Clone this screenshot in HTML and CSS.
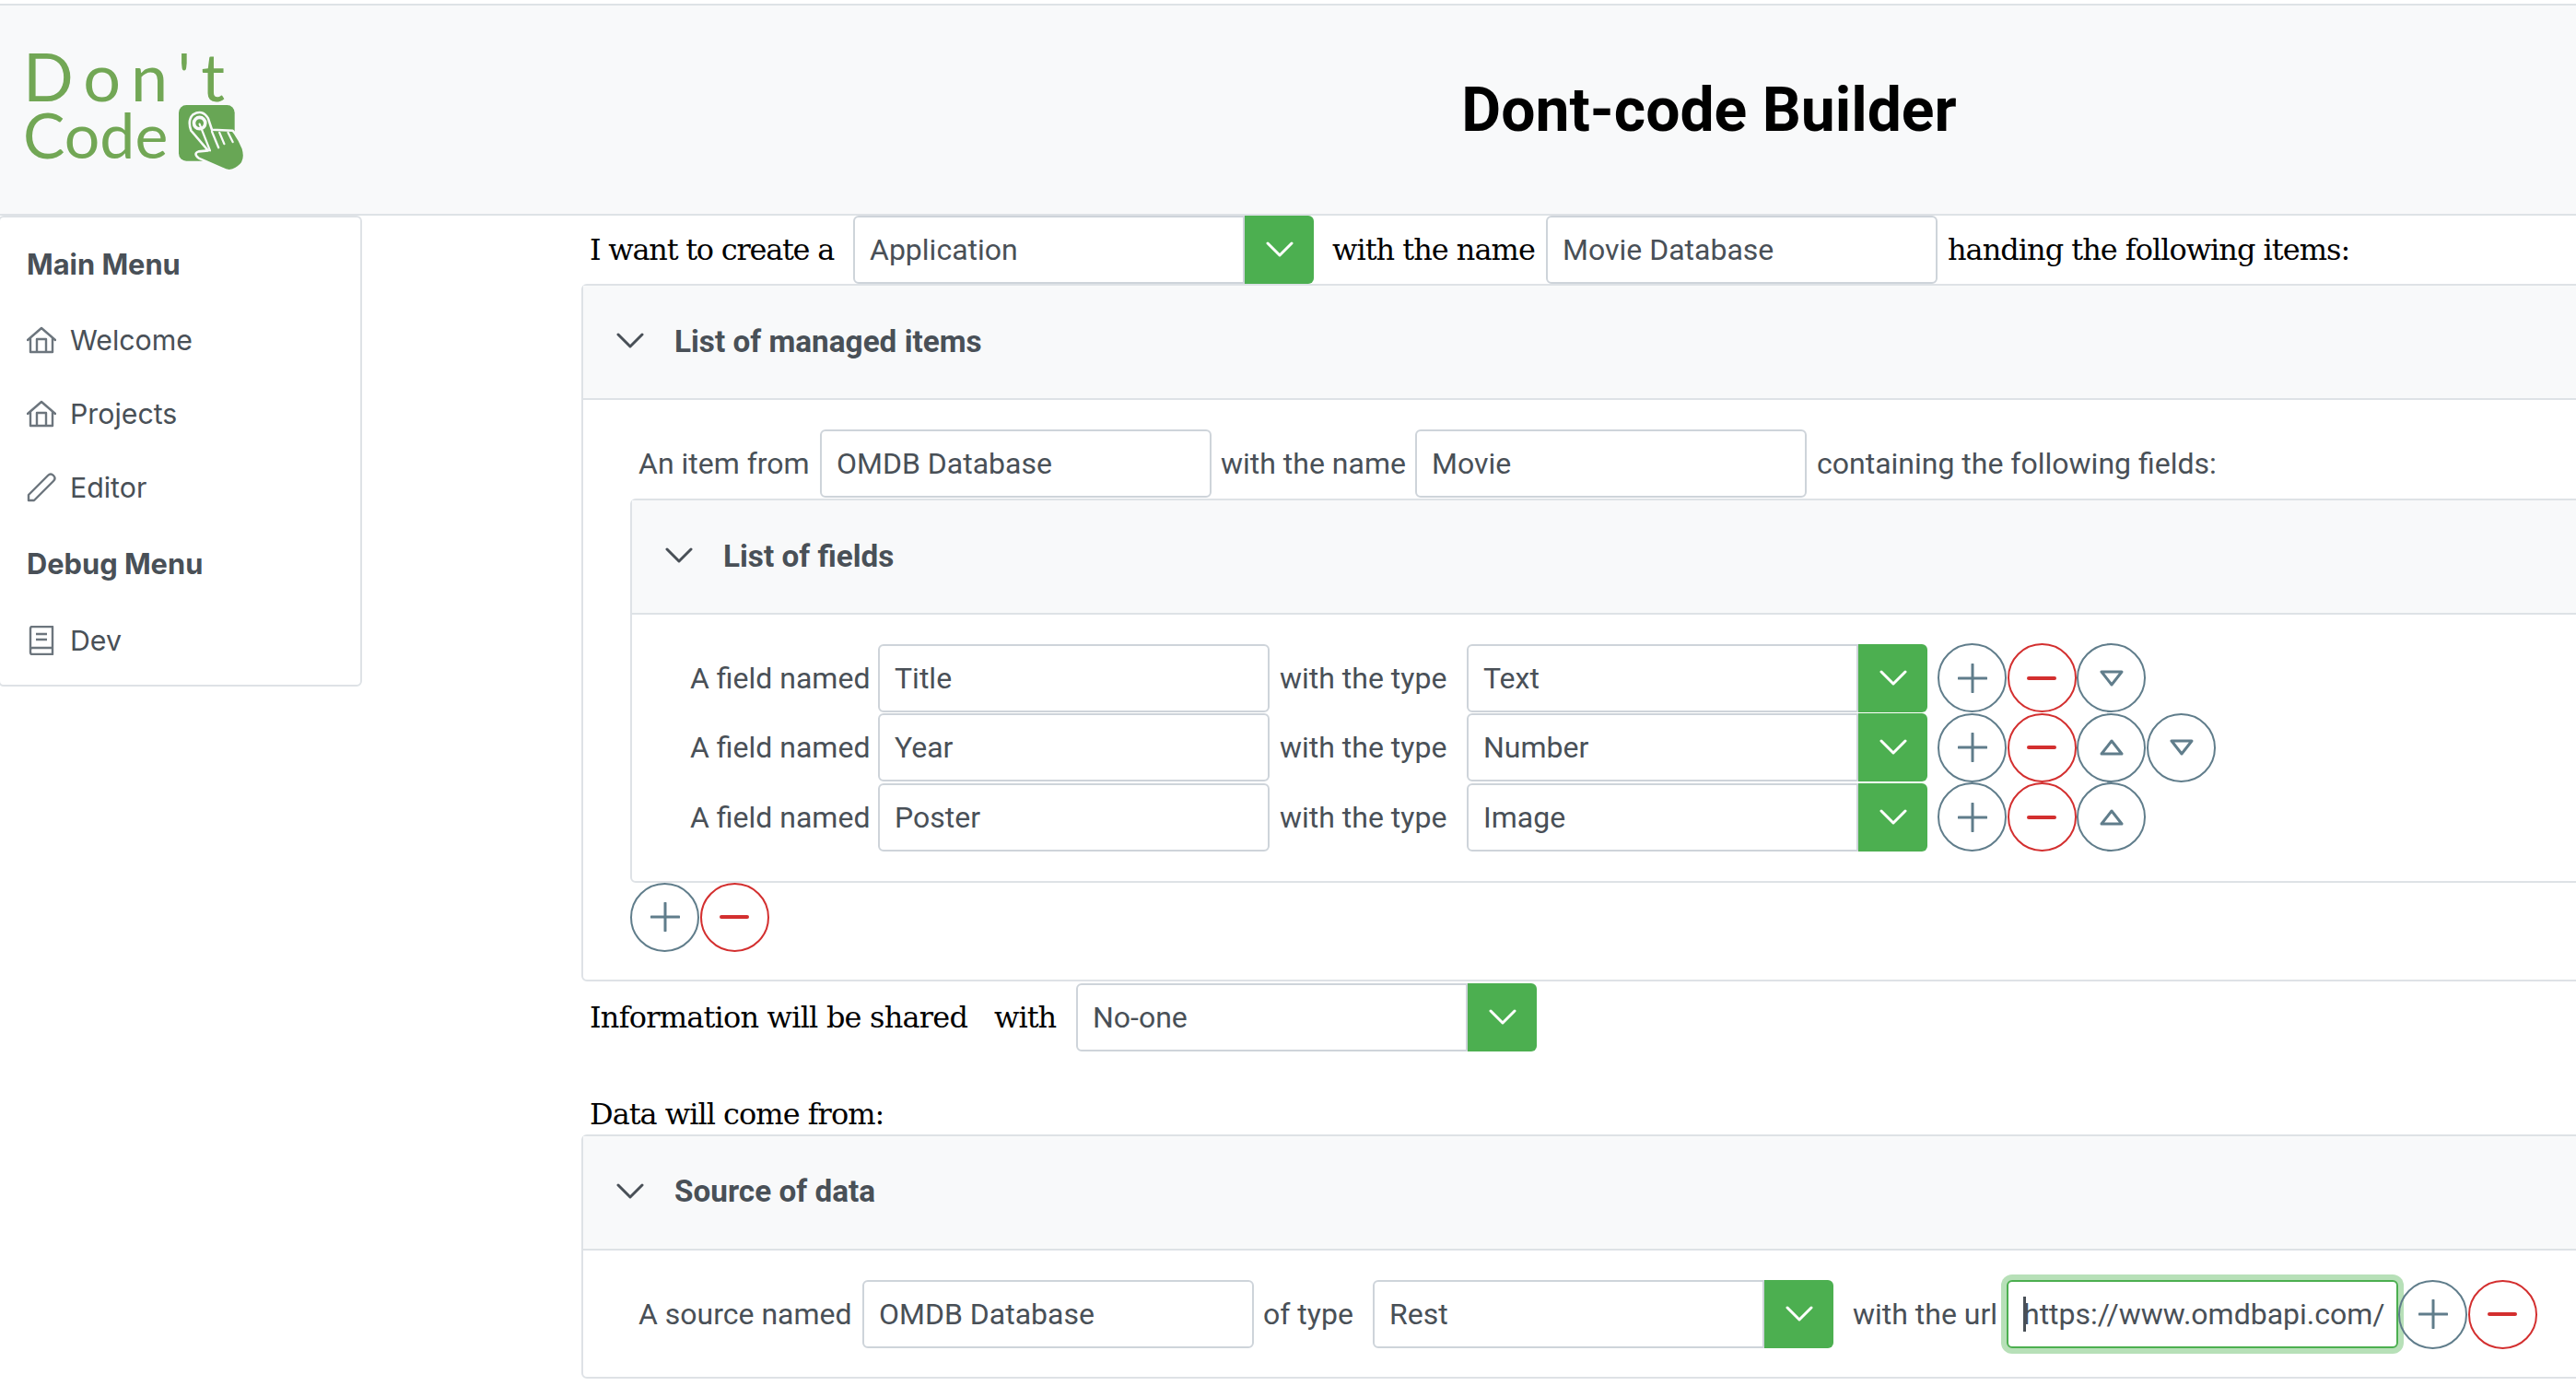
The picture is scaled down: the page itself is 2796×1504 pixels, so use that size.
FILE: index.html
```html
<!DOCTYPE html>
<html lang="en">
<head>
  <meta charset="UTF-8">
  <title>Dont-code Builder</title>
  <link rel="stylesheet" href="styles.css">
</head>
<body>
  <svg class="icon-defs" width="0" height="0">
    <symbol id="i-chevron" viewBox="0 0 30 18"><path d="M2 2 L15 15 L28 2" fill="none" stroke="currentColor" stroke-width="3" stroke-linecap="round" stroke-linejoin="round"/></symbol>
    <symbol id="i-plus" viewBox="0 0 32 32"><path d="M16 1 V31 M1 16 H31" fill="none" stroke="currentColor" stroke-width="3" stroke-linecap="round"/></symbol>
    <symbol id="i-minus" viewBox="0 0 32 32"><path d="M2 16 H30" fill="none" stroke="currentColor" stroke-width="4" stroke-linecap="round"/></symbol>
    <symbol id="i-up" viewBox="0 0 26 18"><path d="M13 2 L24 16 H2 Z" fill="none" stroke="currentColor" stroke-width="3" stroke-linejoin="round"/></symbol>
    <symbol id="i-down" viewBox="0 0 26 18"><path d="M2 2 H24 L13 16 Z" fill="none" stroke="currentColor" stroke-width="3" stroke-linejoin="round"/></symbol>
    <symbol id="i-home" viewBox="0 0 32 28"><path d="M1 14 L16 1 L31 14 M4 12 V27 H28 V12 M11 27 V13 H21 V27" fill="none" stroke="currentColor" stroke-width="2.4" stroke-linejoin="round" stroke-linecap="round"/></symbol>
    <symbol id="i-pencil" viewBox="0 0 32 32"><path d="M2 30 V24 L23 3 Q26 0 29 3 Q32 6 29 9 L8 30 Z" fill="none" stroke="currentColor" stroke-width="2.4" stroke-linejoin="round"/></symbol>
    <symbol id="i-book" viewBox="0 0 28 32"><path d="M2 26 V3 Q2 1 4 1 H26 V31 H4 Q2 31 2 29 V26 Q2 24 4 24 H26 M8 9 H20 M8 15 H20" fill="none" stroke="currentColor" stroke-width="2.4" stroke-linejoin="round"/></symbol>
  </svg>

  <header class="topbar">
    <div class="logo">
      <div class="logo-dont">Don't</div>
      <div class="logo-code">
        <span>Code</span>
        <svg class="logo-hand" viewBox="0 0 70 70">
          <rect x="0" y="0" width="59" height="59" rx="8" fill="#68a655"/>
          <path d="M13 27 Q9 16 15 10 Q25 4 31 14 L35 26 L57 27 Q63 34 68 46 Q72 60 62 66 Q54 72 46 67 L21 56 Q15 51 21 49 L31 48 Z" fill="#68a655" stroke="#f8f9fa" stroke-width="2.5" stroke-linejoin="round"/>
          <path d="M22 20 L33 48 M35 28 L42 45 M43 29 L48 41 M52 29 L57 39" fill="none" stroke="#f8f9fa" stroke-width="2.2" stroke-linecap="round"/>
          <circle cx="22" cy="19" r="6" fill="none" stroke="#f8f9fa" stroke-width="3.5"/>
        </svg>
      </div>
    </div>
    <h1 class="title">Dont-code Builder</h1>
  </header>

  <div class="layout">
    <aside class="sidebar">
      <div class="menu-title">Main Menu</div>
      <a class="menu-item"><svg class="menu-icon"><use href="#i-home"/></svg>Welcome</a>
      <a class="menu-item"><svg class="menu-icon"><use href="#i-home"/></svg>Projects</a>
      <a class="menu-item"><svg class="menu-icon"><use href="#i-pencil"/></svg>Editor</a>
      <div class="menu-title">Debug Menu</div>
      <a class="menu-item"><svg class="menu-icon"><use href="#i-book"/></svg>Dev</a>
    </aside>

    <main class="content">
      <div class="row">
        <span class="serif w-create">I want to create a</span>
        <div class="select"><span class="field">Application</span><span class="drop"><svg class="chevron"><use href="#i-chevron"/></svg></span></div>
        <span class="serif w-name">with the name</span>
        <span class="field">Movie Database</span>
        <span class="serif w-handing">handing the following items:</span>
      </div>

      <section class="panel">
        <div class="panel-head"><svg class="chevron"><use href="#i-chevron"/></svg>List of managed items</div>
        <div class="panel-body">
          <div class="row">
            <span class="label w-from">An item from</span>
            <span class="field">OMDB Database</span>
            <span class="label w-withname">with the name</span>
            <span class="field">Movie</span>
            <span class="label w-containing">containing the following fields:</span>
          </div>

          <section class="panel inner">
            <div class="panel-head"><svg class="chevron"><use href="#i-chevron"/></svg>List of fields</div>
            <div class="panel-body fields">
              <div class="row field-row">
                <span class="label w-named">A field named</span>
                <span class="field">Title</span>
                <span class="label w-type">with the type</span>
                <div class="select"><span class="field">Text</span><span class="drop"><svg class="chevron"><use href="#i-chevron"/></svg></span></div>
                <button class="round"><svg class="plus"><use href="#i-plus"/></svg></button>
                <button class="round red"><svg class="plus"><use href="#i-minus"/></svg></button>
                <button class="round"><svg class="tri"><use href="#i-down"/></svg></button>
              </div>
              <div class="row field-row">
                <span class="label w-named">A field named</span>
                <span class="field">Year</span>
                <span class="label w-type">with the type</span>
                <div class="select"><span class="field">Number</span><span class="drop"><svg class="chevron"><use href="#i-chevron"/></svg></span></div>
                <button class="round"><svg class="plus"><use href="#i-plus"/></svg></button>
                <button class="round red"><svg class="plus"><use href="#i-minus"/></svg></button>
                <button class="round"><svg class="tri"><use href="#i-up"/></svg></button>
                <button class="round"><svg class="tri"><use href="#i-down"/></svg></button>
              </div>
              <div class="row field-row">
                <span class="label w-named">A field named</span>
                <span class="field">Poster</span>
                <span class="label w-type">with the type</span>
                <div class="select"><span class="field">Image</span><span class="drop"><svg class="chevron"><use href="#i-chevron"/></svg></span></div>
                <button class="round"><svg class="plus"><use href="#i-plus"/></svg></button>
                <button class="round red"><svg class="plus"><use href="#i-minus"/></svg></button>
                <button class="round"><svg class="tri"><use href="#i-up"/></svg></button>
              </div>
            </div>
          </section>

          <div class="row">
            <button class="round"><svg class="plus"><use href="#i-plus"/></svg></button>
            <button class="round red"><svg class="plus"><use href="#i-minus"/></svg></button>
          </div>
        </div>
      </section>

      <div class="row share-row">
        <span class="serif w-shared">Information will be shared</span>
        <span class="serif w-with">with</span>
        <div class="select"><span class="field">No-one</span><span class="drop"><svg class="chevron"><use href="#i-chevron"/></svg></span></div>
      </div>

      <div class="serif data-line">Data will come from:</div>

      <section class="panel">
        <div class="panel-head"><svg class="chevron"><use href="#i-chevron"/></svg>Source of data</div>
        <div class="panel-body">
          <div class="row">
            <span class="label w-source">A source named</span>
            <span class="field">OMDB Database</span>
            <span class="label w-oftype">of type</span>
            <div class="select"><span class="field">Rest</span><span class="drop"><svg class="chevron"><use href="#i-chevron"/></svg></span></div>
            <span class="label w-url">with the url</span>
            <span class="field focused"><i class="caret"></i>https://www.omdbapi.com/</span>
            <button class="round"><svg class="plus"><use href="#i-plus"/></svg></button>
            <button class="round red"><svg class="plus"><use href="#i-minus"/></svg></button>
          </div>
        </div>
      </section>
    </main>
  </div>
</body>
</html>
```

FILE: styles.css
```css
html, body {
  margin: 0;
  height: 1504px;
  overflow: hidden;
  background: #fff;
}

body {
  padding-top: 4px;
  box-sizing: border-box;
  font-family: Roboto, sans-serif;
  font-size: 32px;
  color: #495057;
}

.icon-defs {
  position: absolute;
}

/* header */
.topbar {
  display: grid;
  grid-template-columns: 914px 1fr;
  align-items: center;
  height: 230px;
  box-sizing: border-box;
  background: #f8f9fa;
  border-top: 2px solid #dee2e6;
  border-bottom: 2px solid #dee2e6;
}

.logo {
  padding-left: 25px;
  margin-top: -3px;
  color: #72a755;
  font-family: Lato, sans-serif;
  font-weight: 400;
}

.logo-dont {
  font-size: 72px;
  line-height: 64px;
  letter-spacing: 11px;
}

.logo-code {
  display: flex;
  align-items: flex-start;
  font-size: 68px;
  line-height: 64px;
}

.logo-hand {
  width: 72px;
  height: 72px;
  margin-left: 12px;
  flex: none;
}

.title {
  margin: 0;
  text-align: center;
  font-size: 66px;
  font-weight: 700;
  color: #000;
}

/* sidebar */
.layout {
  display: flex;
  align-items: flex-start;
}

.sidebar {
  width: 395px;
  height: 511px;
  margin-left: -2px;
  flex: none;
  box-sizing: border-box;
  padding: 13px 0 0 29px;
  border: 2px solid #dee2e6;
  border-radius: 6px;
  font-family: Inter, sans-serif;
  font-size: 30.3px;
}

.menu-title {
  height: 76px;
  line-height: 76px;
  margin-bottom: 5px;
  font-size: 30.8px;
  font-weight: 700;
}

.menu-title:first-child {
  margin-bottom: 4px;
}

.menu-item + .menu-title {
  margin-top: 5px;
}

.menu-item {
  display: flex;
  align-items: center;
  height: 80px;
}

.menu-icon {
  width: 32px;
  height: 32px;
  margin-right: 15px;
  color: #6c757d;
}

/* main */
.content {
  flex: 1;
  min-width: 0;
  padding-left: 237px;
  overflow: hidden;
}

.row {
  display: flex;
  align-items: center;
  white-space: nowrap;
}

.serif {
  box-sizing: border-box;
  font-family: "DejaVu Serif", serif;
  font-size: 32px;
  letter-spacing: -1px;
  color: #000;
}

.field {
  display: flex;
  align-items: center;
  width: 425px;
  height: 74px;
  flex: none;
  box-sizing: border-box;
  padding-left: 16px;
  background: #fff;
  border: 2px solid #ced4da;
  border-radius: 6px;
}

.select {
  display: flex;
  flex: none;
}

.select .field {
  border-radius: 6px 0 0 6px;
}

.select + .round {
  margin-left: 11px;
}

.drop {
  display: flex;
  align-items: center;
  justify-content: center;
  width: 75px;
  height: 74px;
  background: #4caf50;
  border-radius: 0 6px 6px 0;
  color: #fff;
}

.chevron {
  width: 30px;
  height: 18px;
  flex: none;
}

.round {
  display: flex;
  align-items: center;
  justify-content: center;
  width: 75px;
  height: 75px;
  flex: none;
  margin: 0 0.7px 0 0;
  padding: 0;
  background: transparent;
  border: 2px solid #607d8b;
  border-radius: 50%;
  color: #607d8b;
}

.round.red {
  border-color: #d32f2f;
  color: #d32f2f;
}

.plus {
  width: 32px;
  height: 32px;
}

.tri {
  width: 26px;
  height: 18px;
}

/* panels run past the right edge of the window */
.panel {
  margin-left: 1px;
  margin-right: -20px;
  border: 2px solid #dee2e6;
  border-radius: 6px;
}

.panel-head {
  display: flex;
  align-items: center;
  box-sizing: border-box;
  height: 124px;
  padding: 0 0 2px 36px;
  background: #f8f9fa;
  border-bottom: 2px solid #dee2e6;
  font-size: 33.3px;
  font-weight: 700;
}

.panel-head .chevron {
  margin-right: 33px;
}

.panel-body {
  padding: 32px 0 30px 51px;
}

.inner {
  margin: 1px 0 0 0;
}

.fields {
  padding: 31px 0 31px 63px;
}

.label {
  flex: none;
  box-sizing: border-box;
  padding-left: 9px;
}

.field-row {
  height: 75.6px;
}

.share-row {
  margin-top: 2px;
}

.data-line {
  height: 37px;
  margin: 50px 0 3px;
  padding-left: 10px;
  line-height: 37px;
}

.focused {
  border-color: #4caf50;
  box-shadow: 0 0 0 6px #b7e0b8;
}

.caret {
  width: 3px;
  height: 38px;
  margin-right: -3px;
  background: #495057;
}

/* label widths, so the controls line up */
.w-create { width: 296px; padding-left: 10px; letter-spacing: -1.25px; }
.w-name { width: 252px; padding-left: 20px; }
.w-handing { padding-left: 11px; }
.w-from { width: 206px; }
.w-withname { width: 221px; padding-left: 10px; }
.w-containing { padding-left: 11px; }
.w-named { width: 204px; padding-left: 0; }
.w-type { width: 214px; padding-left: 11px; }
.w-shared { width: 449px; padding-left: 10px; letter-spacing: -0.8px; }
.w-with { width: 89px; }
.w-source { width: 252px; }
.w-oftype { width: 129px; padding-left: 10px; }
.w-url { width: 188px; padding-left: 21px; }
```
